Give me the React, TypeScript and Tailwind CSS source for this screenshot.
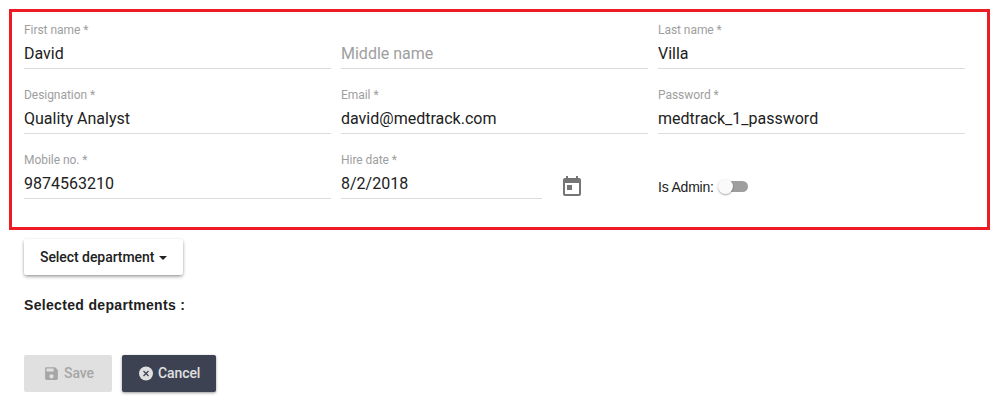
import { ReactNode } from "react";

function Field({ label, value, placeholder, className = "" }: { label?: string; value?: string; placeholder?: string; className?: string }) {
  return (
    <div className={`flex h-[65px] flex-col ${className}`}>
      <div className="mt-px h-[15px] text-[12px] leading-[15px] tracking-[-0.05px] text-[#9e9e9e]">{label}</div>
      <div className="mt-[2px] h-[29px] border-b border-[#dcdcdc] pt-[3px] text-[16px] leading-[22px]">
        {value ? <span className="text-[#212121]">{value}</span> : <span className="text-[#9e9e9e]">{placeholder}</span>}
      </div>
    </div>
  );
}

function Button({ children, className }: { children: ReactNode; className: string }) {
  return <button className={`flex items-center rounded-[2px] text-[14px] font-medium ${className}`}>{children}</button>;
}

export default function App() {
  return (
    <main className="h-[415px] w-[1008px] bg-white pl-[9px] pt-[9px] font-['Roboto',sans-serif] text-[#212121]">
      <section className="h-[221px] w-[981px] border-[3px] border-[#ed1c24] pl-[12px] pt-[10px]">
        <div className="grid grid-cols-[307px_307px_307px] gap-x-[10px]">
          <Field label="First name *" value="David" />
          <Field placeholder="Middle name" />
          <Field label="Last name *" value="Villa" />
          <Field label="Designation *" value="Quality Analyst" />
          <Field label="Email *" value="david@medtrack.com" />
          <Field label="Password *" value="medtrack_1_password" />
          <Field label="Mobile no. *" value="9874563210" />
          <div className="flex">
            <Field label="Hire date *" value="8/2/2018" className="w-[201px]" />
            <svg viewBox="0 0 24 24" className="ml-[18px] mt-[23px] size-[24px] fill-[#757575]">
              <path d="M19 3h-1V1h-2v2H8V1H6v2H5c-1.11 0-1.99.9-1.99 2L3 19c0 1.1.89 2 2 2h14c1.1 0 2-.9 2-2V5c0-1.1-.9-2-2-2zm0 16H5V8h14v11zM7 10h5v5H7z" />
            </svg>
          </div>
          <div className="mt-[23px] flex h-[24px] items-center font-['Liberation_Sans',sans-serif] text-[14px]">
            <span className="tracking-[-0.2px]">Is Admin:</span>
            <div className="-mt-px ml-[6px] flex h-[11px] w-[28px] items-center rounded-full bg-[#9e9e9e]">
              <div className="-ml-[2px] size-[15px] shrink-0 rounded-full bg-[#fafafa] shadow-[0_1px_2px_rgba(0,0,0,0.35)]" />
            </div>
          </div>
        </div>
      </section>
      <div className="pl-[15px]">
        <Button className="mt-[9px] h-[36px] w-[159px] pl-[16px] shadow-[0_2px_4px_-1px_rgba(0,0,0,0.35),0_1px_3px_rgba(0,0,0,0.2)]">
          <span className="tracking-[-0.06px]">Select department</span>
          <span className="ml-[5px] mt-[2px] border-x-4 border-t-4 border-x-transparent border-t-[#212121]" />
        </Button>
        <div className="mt-[20px] h-[20px] font-['Liberation_Sans',sans-serif] text-[14px] font-bold leading-[20px] tracking-[0.33px]">Selected departments :</div>
        <div className="mt-[40px] flex gap-[10px]">
          <Button className="h-[37px] w-[88px] bg-[#e0e0e0] pl-[19px] text-[#a6a6a6]">
            <svg viewBox="0 0 24 24" className="mr-[4px] size-[17px] fill-current">
              <path d="M17 3H5c-1.11 0-2 .9-2 2v14c0 1.1.89 2 2 2h14c1.1 0 2-.9 2-2V7l-4-4zm-5 16c-1.66 0-3-1.34-3-3s1.34-3 3-3 3 1.34 3 3-1.34 3-3 3zm3-10H5V5h10v4z" />
            </svg>
            <span className="-mt-px tracking-[-0.1px]">Save</span>
          </Button>
          <Button className="h-[37px] w-[94px] bg-[#3c4252] pl-[16px] text-[#e0e0e0] shadow-[0_1px_3px_rgba(0,0,0,0.4)]">
            <svg viewBox="0 0 17 17" className="mr-[3px] size-[17px]">
              <circle cx="8" cy="8.5" r="7" fill="currentColor" />
              <path d="M5.5 6l5 5M10.5 6l-5 5" stroke="#3c4252" strokeWidth="1.2" />
            </svg>
            <span className="-mt-px tracking-[-0.1px]">Cancel</span>
          </Button>
        </div>
      </div>
    </main>
  );
}
